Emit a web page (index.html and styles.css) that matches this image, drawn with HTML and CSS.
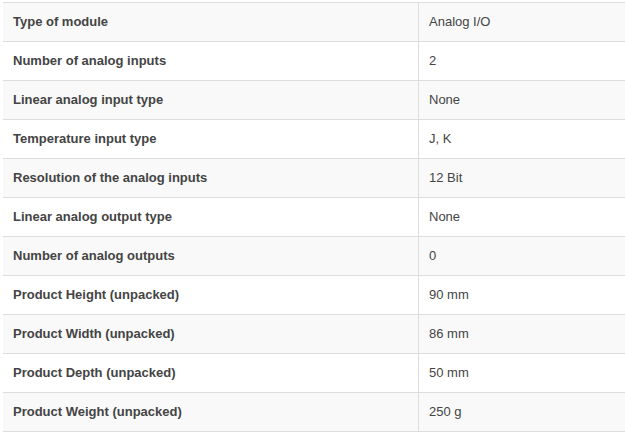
FILE: index.html
```html
<!DOCTYPE html>
<html>
<head>
<meta charset="utf-8">
<link rel="stylesheet" href="styles.css">
</head>
<body>
<table class="specs">
  <tbody>
    <tr><th>Type of module</th><td>Analog I/O</td></tr>
    <tr><th>Number of analog inputs</th><td>2</td></tr>
    <tr><th>Linear analog input type</th><td>None</td></tr>
    <tr><th>Temperature input type</th><td>J, K</td></tr>
    <tr><th>Resolution of the analog inputs</th><td>12 Bit</td></tr>
    <tr><th>Linear analog output type</th><td>None</td></tr>
    <tr><th>Number of analog outputs</th><td>0</td></tr>
    <tr><th>Product Height (unpacked)</th><td>90 mm</td></tr>
    <tr><th>Product Width (unpacked)</th><td>86 mm</td></tr>
    <tr><th>Product Depth (unpacked)</th><td>50 mm</td></tr>
    <tr><th>Product Weight (unpacked)</th><td>250 g</td></tr>
  </tbody>
</table>
</body>
</html>
```

FILE: styles.css
```css
html, body {
  margin: 0;
  background: #ffffff;
}
body {
  padding: 2px 0 0 3px;
  font-family: "Liberation Sans", Arial, sans-serif;
  font-size: 13px;
  color: #444444;
  overflow: hidden;
}
.specs {
  border-collapse: collapse;
  width: 622px;
  table-layout: fixed;
  border-top: 1px solid #dddddd;
}
.specs th,
.specs td {
  padding: 10px 10px;
  line-height: 18px;
  height: 18px;
  text-align: left;
  vertical-align: middle;
  border-bottom: 1px solid #dddddd;
}
.specs th {
  width: 395px;
  font-weight: bold;
  border-right: 1px solid #dddddd;
}
.specs td {
  font-weight: normal;
}
.specs tr:nth-child(odd) th,
.specs tr:nth-child(odd) td {
  background: #f9f9f9;
}
```
